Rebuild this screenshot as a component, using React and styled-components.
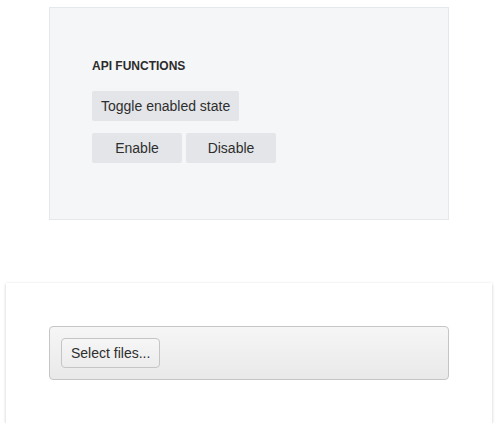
import React from "react";
import styled, { createGlobalStyle } from "styled-components";

const GlobalStyle = createGlobalStyle`
  html, body {
    margin: 0;
    padding: 0;
    background: #ffffff;
    font-family: "Liberation Sans", Arial, sans-serif;
    color: #2e2e2e;
  }
`;

const Page = styled.div`
  display: flex;
  flex-direction: column;
  align-items: flex-start;
  padding-top: 7px;
  gap: 63px;
`;

const Box = styled.div`
  box-sizing: border-box;
  margin-left: 49px;
  width: 400px;
  height: 213px;
  padding: 51px 42px 0;
  background: #f5f6f8;
  border: 1px solid #e6e9ec;
`;

const Heading = styled.h4`
  margin: 0 0 18px;
  font-size: 12px;
  line-height: 14px;
  font-weight: bold;
  text-transform: uppercase;
  color: #2b2b2b;
`;

const Row = styled.div`
  display: flex;
  gap: 4px;
  margin-bottom: 12px;
`;

const FlatButton = styled.button`
  box-sizing: border-box;
  width: ${(p) => (p.$wide ? "auto" : "90px")};
  height: 30px;
  padding: 0 9px;
  border: none;
  border-radius: 2px;
  background: #e4e5e8;
  color: #2e2e2e;
  font-family: "Liberation Sans", Arial, sans-serif;
  font-size: 14px;
  line-height: 30px;
  cursor: pointer;
`;

const Card = styled.div`
  box-sizing: border-box;
  margin-left: 6px;
  width: 486px;
  padding: 43px 43px;
  background: #ffffff;
  box-shadow: 0 1px 3px rgba(0, 0, 0, 0.22);
`;

const Upload = styled.div`
  box-sizing: border-box;
  width: 400px;
  padding: 11px;
  border: 1px solid #c5c5c5;
  border-radius: 4px;
  background: linear-gradient(#f6f6f6, #e9e9e9);
`;

const SelectButton = styled.button`
  box-sizing: border-box;
  height: 30px;
  padding: 0 9px;
  border: 1px solid #c5c5c5;
  border-radius: 4px;
  background: linear-gradient(#f6f6f6, #ececec);
  color: #2e2e2e;
  font-family: "Liberation Sans", Arial, sans-serif;
  font-size: 14px;
  line-height: 28px;
  cursor: pointer;
`;

export default function App() {
  return (
    <>
      <GlobalStyle />
      <Page>
        <Box>
          <Heading>API Functions</Heading>
          <Row>
            <FlatButton $wide>Toggle enabled state</FlatButton>
          </Row>
          <Row>
            <FlatButton>Enable</FlatButton>
            <FlatButton>Disable</FlatButton>
          </Row>
        </Box>
        <Card>
          <Upload>
            <SelectButton>Select files...</SelectButton>
          </Upload>
        </Card>
      </Page>
    </>
  );
}
